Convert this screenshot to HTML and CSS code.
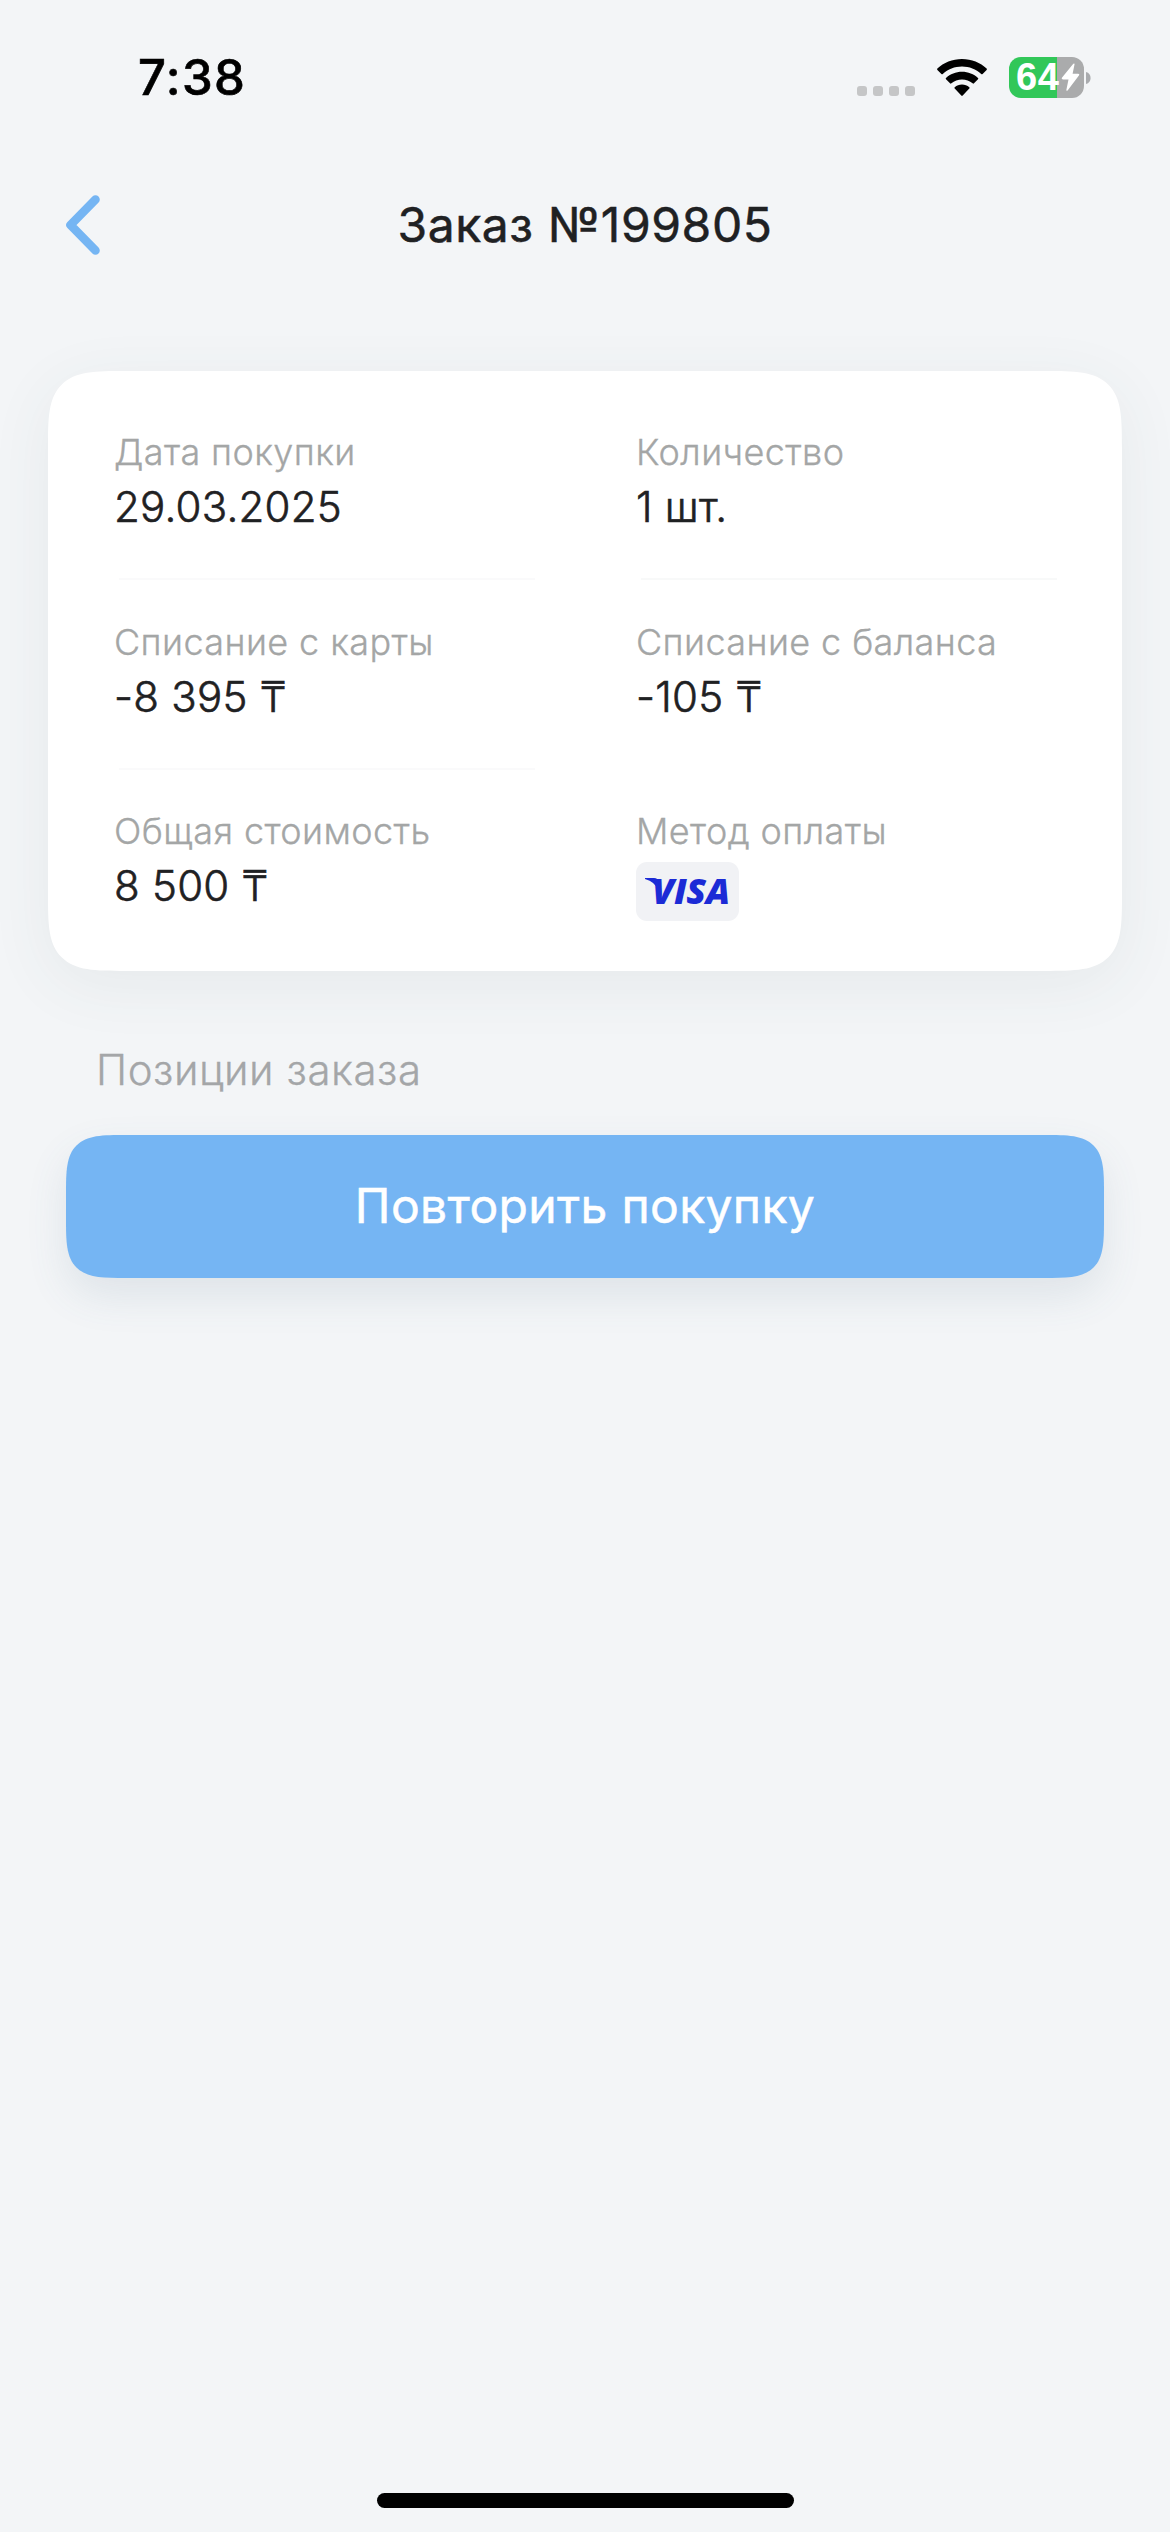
FILE: index.html
```html
<!DOCTYPE html>
<html lang="ru">
<head>
  <meta charset="utf-8">
  <title>Заказ №199805</title>
  <link rel="stylesheet" href="styles.css">
</head>
<body>
  <div class="screen">
    <div class="status-bar">
      <span class="time">7:38</span>
      <div class="indicators">
        <div class="signal"><i></i><i></i><i></i><i></i></div>
        <svg class="wifi" width="50" height="38" viewBox="0 0 50 38" fill="#000">
          <path d="M25 0C34.600 0 43.400 3.700 49.600 9.500Q50.200 10.200 49.600 10.900L45.600 15Q44.900 15.700 44.200 15C39 10.300 32.300 7.600 25 7.600S11 10.300 5.800 15Q5.100 15.700 4.400 15L.4 10.900Q-.2 10.200.4 9.500C6.600 3.700 15.400 0 25 0Z"/>
          <path d="M25 12.800C31.200 12.800 36.800 15.100 41 18.900Q41.700 19.600 41 20.300L37 24.300Q36.300 25 35.600 24.300C32.700 21.900 29 20.500 25 20.500S17.300 21.900 14.400 24.300Q13.700 25 13 24.300L9 20.300Q8.300 19.600 9 18.900C13.200 15.100 18.800 12.800 25 12.800Z"/>
          <path d="M25 25.500C27.800 25.500 30.300 26.500 32.300 28.200Q33 28.900 32.300 29.600L25.700 36.600Q25 37.300 24.300 36.600L17.700 29.600Q17 28.900 17.700 28.200C19.700 26.500 22.200 25.500 25 25.500Z"/>
        </svg>
        <div class="battery">
          <div class="battery-body">
            <span class="battery-level">64</span>
            <svg class="bolt" width="19" height="29" viewBox="0 0 19 29" fill="#fff"><path d="M12.300.8Q13.800-.3 13.500 1.500L11.600 10.800H17Q19 10.900 17.900 12.500L6.800 27.200Q5.300 28.700 5.400 26.700L7.500 16.500H2Q0 16.300 1.100 14.600Z"/></svg>
          </div>
          <svg class="battery-cap" width="5" height="12" viewBox="0 0 5 12"><path d="M0 0C3 .8 4.600 3 4.600 6S3 11.200 0 12Z" fill="#a9abae"/></svg>
        </div>
      </div>
    </div>

    <header class="header">
      <svg class="back" width="36" height="62" viewBox="0 0 36 62"><path d="M30.500 5.500L5.500 31L30.500 56.500" fill="none" stroke="#75b5f3" stroke-width="8.600" stroke-linecap="round" stroke-linejoin="round"/></svg>
      <h1 class="title">Заказ №199805</h1>
    </header>

    <section class="card">
      <div class="field">
        <span class="label">Дата покупки</span>
        <span class="value">29.03.2025</span>
        <hr class="divider faint">
      </div>
      <div class="field">
        <span class="label">Количество</span>
        <span class="value">1 шт.</span>
        <hr class="divider">
      </div>
      <div class="field">
        <span class="label">Списание с карты</span>
        <span class="value">-8 395 ₸</span>
        <hr class="divider faint">
      </div>
      <div class="field">
        <span class="label">Списание с баланса</span>
        <span class="value">-105 ₸</span>
      </div>
      <div class="field">
        <span class="label">Общая стоимость</span>
        <span class="value">8 500 ₸</span>
      </div>
      <div class="field">
        <span class="label">Метод оплаты</span>
        <span class="visa">
          <svg class="visa-wing" width="14" height="13" viewBox="0 0 14 13"><path d="M0 0H9Q13 0 13.500 4L14 13Q10 3.500 0 .9Z" fill="#1c2bd6"/></svg>
          <span class="visa-name">VISA</span>
        </span>
      </div>
    </section>

    <h2 class="section-title">Позиции заказа</h2>
    <button class="repeat" type="button">Повторить покупку</button>
    <div class="home-indicator"></div>
  </div>
</body>
</html>
```
FILE: styles.css
```css
* {
  box-sizing: border-box;
}

body {
  margin: 0;
  background: #f3f5f7;
  color: #1f2123;
  font-family: Inter, "Noto Sans", sans-serif;
}

.screen {
  display: flex;
  flex-direction: column;
  height: 2532px;
  overflow: hidden;
}

.status-bar {
  display: flex;
  justify-content: space-between;
  align-items: flex-start;
  height: 141px;
  padding: 48px 79px 0 138px;
}

.time {
  color: #000;
  font-size: 49px;
  font-weight: 500;
  line-height: 60px;
  letter-spacing: 1.4px;
  -webkit-text-stroke: 0.6px currentColor;
}

.indicators {
  display: flex;
  padding-top: 9px;
}

.signal {
  display: flex;
  gap: 6px;
  margin: 29px 22px 0 0;
}

.signal i {
  width: 10px;
  height: 10px;
  border-radius: 3px;
  background: #c5c6c7;
}

.wifi {
  margin: 2px 22px 0 0;
}

.battery {
  display: flex;
  align-items: center;
  gap: 2px;
  height: 41px;
}

.battery-body {
  display: flex;
  align-items: center;
  width: 75px;
  height: 41px;
  padding-left: 7px;
  border-radius: 12px;
  background: linear-gradient(90deg, #31c759 48px, #aaabac 48px);
}

.battery-level {
  width: 45px;
  color: #fff;
  font-family: "Liberation Sans", sans-serif;
  font-size: 38px;
  font-weight: 700;
  line-height: 41px;
  letter-spacing: 0.5px;
}

.bolt {
  flex: none;
}

.header {
  display: grid;
  grid-template-columns: 36px 1fr 36px;
  align-items: center;
  height: 168px;
  margin: 0 65px 62px;
}

.title {
  margin: 0;
  font-size: 48px;
  font-weight: 400;
  line-height: 60px;
  letter-spacing: 0.59px;
  text-align: center;
  -webkit-text-stroke: 0.5px currentColor;
}

.card {
  display: grid;
  grid-template-columns: 522px 1fr;
  grid-auto-rows: 189.5px;
  height: 600px;
  margin: 0 48px;
  padding: 59px 0 0 66px;
  border-radius: 50px;
  background: #fff;
  box-shadow: 0 14px 64px rgba(60, 85, 85, 0.07);
}

.field {
  display: flex;
  flex-direction: column;
  align-items: flex-start;
}

.label {
  color: #a4a6a6;
  font-size: 36px;
  font-weight: 300;
  line-height: 44px;
  letter-spacing: 0.4px;
  -webkit-text-stroke: 0.3px currentColor;
}

.value {
  margin-top: 5px;
  font-size: 42px;
  font-weight: 300;
  line-height: 56px;
  letter-spacing: 0.25px;
  -webkit-text-stroke: 0.6px currentColor;
}

.divider {
  width: 416px;
  height: 2px;
  margin: 43px 0 0 5px;
  border: 0;
  background: #f8f9f9;
}

.divider.faint {
  background: #fafafb;
}

.visa {
  position: relative;
  width: 103px;
  height: 59px;
  margin-top: 9px;
  padding-left: 16px;
  border-radius: 11px;
  background: #f1f2f5;
}

.visa-wing {
  position: absolute;
  top: 16px;
  left: 9px;
}

.visa-name {
  color: #1c2bd6;
  font-family: "Open Sans", sans-serif;
  font-size: 36px;
  font-style: italic;
  font-weight: 800;
  line-height: 57px;
  letter-spacing: -0.3px;
}

.section-title {
  margin: 73px 0 0 96px;
  color: #a4a6a8;
  font-size: 42px;
  font-weight: 300;
  line-height: 52px;
  letter-spacing: 0.56px;
  -webkit-text-stroke: 0.3px currentColor;
}

.repeat {
  height: 143px;
  margin: 39px 66px 0;
  padding: 0 0 2px;
  border: 0;
  border-radius: 41px;
  background: #75b5f3;
  box-shadow: 0 18px 42px rgba(70, 105, 135, 0.12);
  color: #fff;
  font-family: inherit;
  font-size: 48px;
  font-weight: 400;
  line-height: 60px;
  letter-spacing: 0.35px;
  -webkit-text-stroke: 0.5px currentColor;
}

@supports (corner-shape: superellipse(1.85)) {
  .card {
    border-radius: 78px;
    corner-shape: superellipse(1.85);
  }

  .repeat {
    border-radius: 60px;
    corner-shape: superellipse(1.85);
  }
}

.home-indicator {
  align-self: center;
  width: 417px;
  height: 15px;
  margin: auto 0 24px;
  border-radius: 8px;
  background: #000;
}
```
